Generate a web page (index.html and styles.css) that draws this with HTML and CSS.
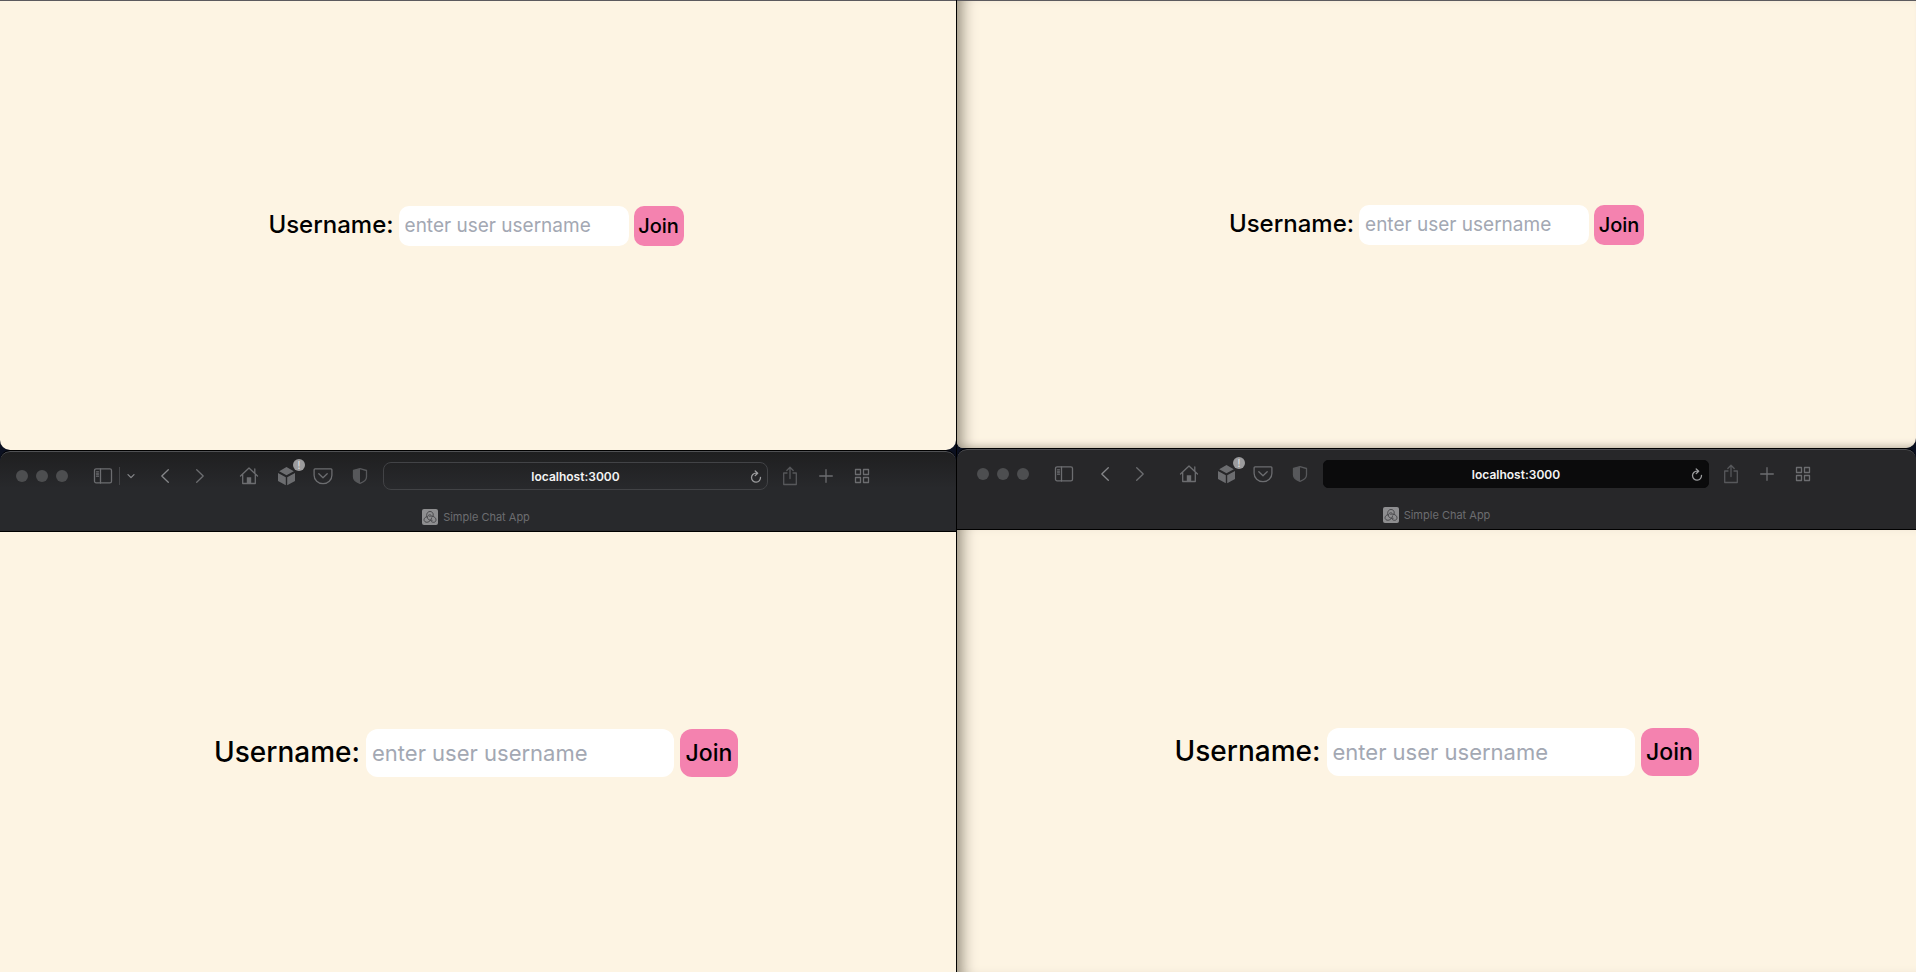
FILE: index.html
```
<!DOCTYPE html>
<html lang="en">
<head>
<meta charset="utf-8">
<title>Simple Chat App</title>
<link rel="stylesheet" href="styles.css">
</head>
<body>
<svg class="sprite" aria-hidden="true">
  <symbol id="sidebar" viewBox="0 0 20 20"><rect x="1.5" y="2.8" width="17" height="14" rx="1.6"/><path d="M7.5 3v14M3.5 5.8h2M3.5 8h2M3.5 10.2h2"/></symbol>
  <symbol id="down" viewBox="0 0 10 20"><path d="M2 8.6l3 3 3-3"/></symbol>
  <symbol id="back" viewBox="0 0 20 20"><path d="M13.3 3.7L6.8 10l6.500 6.300"/></symbol>
  <symbol id="forward" viewBox="0 0 20 20"><path d="M6.700 3.700L13.200 10l-6.500 6.300"/></symbol>
  <symbol id="home" viewBox="0 0 20 20"><path d="M1.500 10L10 2l8.500 8M3.700 8.500v9h12.600v-9M15.800 7V3"/><path class="solid" d="M7.800 17.500v-6.300h4.400v6.300z"/></symbol>
  <symbol id="cube" viewBox="0 0 20 20"><path class="solid" d="M10.500 1l7.300 4.200-7.300 4-7.300-4zM2 7l7.800 4.200v8L2 15zM19 7l-7.800 4.200v8L19 15z"/></symbol>
  <symbol id="pocket" viewBox="0 0 20 20"><path d="M2 2.800h16c.6 0 .9.4.9.9v5.500a8.900 8.500 0 0 1-17.800 0V3.700c0-.5.3-.9.900-.9z"/><path d="M5.800 7.800L10 11.800l4.200-4"/></symbol>
  <symbol id="shield" viewBox="0 0 20 20"><path d="M10 2.700l6.500 1.800v6.500c0 3-3.500 5.300-6.500 6.300-3-1-6.500-3.300-6.500-6.300V4.500z"/><path class="solid" d="M10 2.700v14.600c-3-1-6.500-3.300-6.500-6.300V4.500z"/></symbol>
  <symbol id="reload" viewBox="0 0 14 14"><path d="M11.500 8.300A4.500 4.500 0 1 1 7 4.200h1.500M6.200 1.900l2.500 2.300-2.500 2.400"/></symbol>
  <symbol id="share" viewBox="0 0 20 20"><path d="M7 7H3.700v11.500h12.600V7H13M10 12.500V1.500M6.800 4.500L10 1.300l3.200 3.200"/></symbol>
  <symbol id="plus" viewBox="0 0 20 20"><path d="M10 3.700v12.600M3.700 10h12.600"/></symbol>
  <symbol id="grid" viewBox="0 0 20 20"><path d="M3.500 3.500h5v5h-5zM11.500 3.500h5v5h-5zM3.500 11.500h5v5h-5zM11.500 11.500h5v5h-5z"/></symbol>
  <symbol id="favicon" viewBox="0 0 16 16"><rect class="tile" width="16" height="16" rx="2"/><path class="knot" d="M5.200 8.800C3.800 5.500 5.300 2.500 8 2.500s4 2.500 2.700 5.500M10.500 11.300c-3.500.5-6.300-1.800-4.500-4.500.8-1.200 2.500-1.300 3.300-.3M7.300 7.400c3.300-1 6.700.8 6.700 3.500 0 2.700-3.300 3.200-5 1.200M9.700 8.500c-.7 3.900-4.500 5.800-6.700 4.200-2-1.500-.7-4.200 1.800-5.200"/></symbol>
</svg>
<main class="desktop">
  <div class="column column-left">
    <section class="window window-top">
      <form class="page">
        <label for="user1">Username:</label>
        <input id="user1" type="text" placeholder="enter user username">
        <button type="button">Join</button>
      </form>
    </section>
    <section class="window window-bottom">
      <header class="chrome">
        <div class="toolbar">
          <div class="lights"><i></i><i></i><i></i></div>
          <div class="side">
            <button type="button" aria-label="Sidebar"><svg class="icon"><use href="#sidebar"/></svg></button>
            <span class="rule"></span>
            <button type="button" aria-label="Tab groups"><svg class="icon narrow bright"><use href="#down"/></svg></button>
          </div>
          <div class="history">
            <button type="button" aria-label="Back"><svg class="icon bright"><use href="#back"/></svg></button>
            <button type="button" aria-label="Forward"><svg class="icon"><use href="#forward"/></svg></button>
          </div>
          <div class="extensions">
            <button type="button" aria-label="Home"><svg class="icon"><use href="#home"/></svg></button>
            <button type="button" aria-label="Packages"><svg class="icon"><use href="#cube"/></svg><span class="badge">!</span></button>
            <button type="button" aria-label="Pocket"><svg class="icon"><use href="#pocket"/></svg></button>
            <button type="button" aria-label="Privacy"><svg class="icon dim"><use href="#shield"/></svg></button>
          </div>
          <div class="address">
            <input type="text" aria-label="Address" value="localhost:3000">
            <button type="button" aria-label="Reload"><svg class="icon small"><use href="#reload"/></svg></button>
          </div>
          <div class="actions">
            <button type="button" aria-label="Share"><svg class="icon dim"><use href="#share"/></svg></button>
            <button type="button" aria-label="New tab"><svg class="icon"><use href="#plus"/></svg></button>
            <button type="button" aria-label="Tab overview"><svg class="icon"><use href="#grid"/></svg></button>
          </div>
        </div>
        <div class="tab"><svg class="favicon"><use href="#favicon"/></svg><span>Simple Chat App</span></div>
      </header>
      <form class="page large">
        <label for="user2">Username:</label>
        <input id="user2" type="text" placeholder="enter user username">
        <button type="button">Join</button>
      </form>
    </section>
  </div>
  <div class="column column-right">
    <section class="window window-top">
      <form class="page">
        <label for="user3">Username:</label>
        <input id="user3" type="text" placeholder="enter user username">
        <button type="button">Join</button>
      </form>
    </section>
    <section class="window window-bottom">
      <header class="chrome">
        <div class="toolbar">
          <div class="lights"><i></i><i></i><i></i></div>
          <div class="side">
            <button type="button" aria-label="Sidebar"><svg class="icon"><use href="#sidebar"/></svg></button>
          </div>
          <div class="history">
            <button type="button" aria-label="Back"><svg class="icon bright"><use href="#back"/></svg></button>
            <button type="button" aria-label="Forward"><svg class="icon"><use href="#forward"/></svg></button>
          </div>
          <div class="extensions">
            <button type="button" aria-label="Home"><svg class="icon"><use href="#home"/></svg></button>
            <button type="button" aria-label="Packages"><svg class="icon"><use href="#cube"/></svg><span class="badge">!</span></button>
            <button type="button" aria-label="Pocket"><svg class="icon"><use href="#pocket"/></svg></button>
            <button type="button" aria-label="Privacy"><svg class="icon dim"><use href="#shield"/></svg></button>
          </div>
          <div class="address">
            <input type="text" aria-label="Address" value="localhost:3000">
            <button type="button" aria-label="Reload"><svg class="icon small"><use href="#reload"/></svg></button>
          </div>
          <div class="actions">
            <button type="button" aria-label="Share"><svg class="icon dim"><use href="#share"/></svg></button>
            <button type="button" aria-label="New tab"><svg class="icon"><use href="#plus"/></svg></button>
            <button type="button" aria-label="Tab overview"><svg class="icon"><use href="#grid"/></svg></button>
          </div>
        </div>
        <div class="tab"><svg class="favicon"><use href="#favicon"/></svg><span>Simple Chat App</span></div>
      </header>
      <form class="page large">
        <label for="user4">Username:</label>
        <input id="user4" type="text" placeholder="enter user username">
        <button type="button">Join</button>
      </form>
    </section>
  </div>
</main>
</body>
</html>
```
FILE: styles.css
```
* { box-sizing: border-box; }

body {
  margin: 0;
  background: #0b1020;
  font-family: Inter, "Liberation Sans", sans-serif;
}

button, input { font: inherit; border: 0; margin: 0; padding: 0; outline: 0; }
button { color: inherit; background: none; }

.sprite { display: none; }

.desktop {
  display: grid;
  grid-template-columns: 957fr 959fr;
  height: 100vh;
  min-height: 480px;
}

.column { display: grid; }
.column-left { grid-template-rows: 450fr 522fr; border-right: 1px solid #000; }
.column-right { grid-template-rows: 448fr 524fr; }

.window { display: flex; flex-direction: column; overflow: hidden; }
.window-top { border-top: 1px solid #5c5a5e; border-radius: 0 0 10px 10px; }
.column-right .window-top { border-bottom-left-radius: 6px; }
.window-bottom { border-top: 1px solid #000; border-radius: 10px 10px 0 0; }

/* Page content */
.page {
  flex: 1;
  display: flex;
  align-items: center;
  justify-content: center;
  gap: 5px;
  background: #fdf4e3;
  color: #000;
  font-size: 20px;
}
.column-left .page { padding-right: 4px; }
.column-right .page { box-shadow: inset 16px 0 16px -12px #8a8272; }
.column-right .window-top .page {
  box-shadow: inset 16px 0 16px -12px #8a8272, inset 0 -8px 8px -7px #b8af9c;
}
.page label { padding-bottom: 2px; font-size: 24px; font-weight: 500; }
.page input {
  width: 230px;
  height: 40px;
  padding: 0 6px;
  border-radius: 10px;
  background: #fff;
  font-size: 19px;
}
.page input::placeholder { color: #a3a8b3; opacity: 1; }
.page button {
  width: 50px;
  height: 40px;
  border-radius: 10px;
  background: #f482af;
  font-weight: 500;
}
.page.large { gap: 6px; padding-top: 2px; font-size: 23px; }
.large label { font-size: 28px; }
.large input { width: 308px; height: 48px; border-radius: 12px; font-size: 22px; }
.large button { width: 58px; height: 48px; border-radius: 12px; }

/* Browser chrome */
.chrome {
  padding: 10px 84px 6px 16px;
  border-top: 1px solid #505154;
  border-bottom: 1px solid #000;
  border-radius: 10px 10px 0 0;
  background: linear-gradient(#1f1f20, #28292c 36px);
  color: #6c6d70;
}
.column-right .chrome { padding: 10px 103px 6px 20px; background: #272729; }

.toolbar, .lights, .side, .history, .extensions, .actions { display: flex; align-items: center; }
.toolbar button { display: block; position: relative; }

.lights { gap: 8px; }
.lights i { width: 12px; height: 12px; border-radius: 50%; background: #4d4e50; }
.side { margin-left: 25px; gap: 6px; }
.rule { width: 1px; height: 18px; background: #434447; }
.history { margin-left: 19px; gap: 15px; }
.column-right .history { margin-left: 21px; }
.extensions { margin-left: 29px; gap: 17px; }
.actions { margin-left: 12px; gap: 16px; }

.icon {
  display: block;
  width: 20px;
  height: 20px;
  fill: none;
  stroke: currentColor;
  stroke-width: 1.3;
  stroke-linecap: round;
  stroke-linejoin: round;
}
.solid { fill: currentColor; stroke: none; }
.narrow { width: 10px; }
.small { width: 14px; height: 14px; }
.bright { color: #858689; }
.dim { color: #57585b; }

.badge {
  position: absolute;
  top: -7px;
  right: -9px;
  width: 12px;
  height: 12px;
  border-radius: 50%;
  background: #9b9b9d;
  color: #e4e4e4;
  font-size: 10px;
  line-height: 12px;
  text-align: center;
}

.address {
  flex: 1;
  display: flex;
  align-items: center;
  height: 28px;
  margin-left: 13px;
  padding: 0 4px;
  border: 1px solid #424346;
  border-radius: 8px;
  color: #9a9b9d;
}
.column-right .address { border-color: #0b0b0c; background: #0b0b0c; border-radius: 5px; }
.address input {
  flex: 1;
  min-width: 0;
  padding-left: 14px;
  background: none;
  color: #f4f4f4;
  font-size: 12px;
  font-weight: 600;
  text-align: center;
}

.tab {
  display: flex;
  align-items: center;
  justify-content: center;
  gap: 5px;
  height: 16px;
  margin: 19px -64px 0 0;
  font-size: 11px;
}
.column-right .tab { margin-right: -83px; }
.favicon { width: 16px; height: 16px; }
.tile { fill: #8e8e90; }
.knot { fill: none; stroke: #48484b; stroke-width: 1; }
```
